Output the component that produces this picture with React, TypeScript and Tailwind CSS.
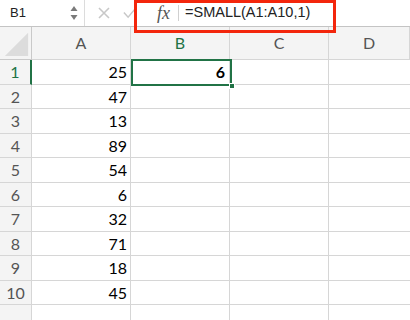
import React from "react";

const values = [25, 47, 13, 89, 54, 6, 32, 71, 18, 45];
const rowHeights = ["h-[25px]", "h-[24px]", "h-[25px]", "h-[24px]", "h-[25px]", "h-[24px]", "h-[25px]", "h-[24px]", "h-[25px]", "h-[24px]", "h-[25px]"];

function Corner() {
  return (
    <div className="relative h-full border-r border-b border-[#c9c9c9] bg-[#f4f4f4]">
      <svg viewBox="0 0 32 33" className="absolute inset-0 size-full" aria-hidden="true">
        <polygon points="29,6 29,30 5,30" fill="#dcdcdc" />
      </svg>
    </div>
  );
}

function ColHeader({ label, active }: { label: string; active?: boolean }) {
  return (
    <div
      className={`flex h-full items-center justify-center border-r border-b border-[#d6d6d6] bg-[#f4f4f4] text-[16px] ${
        active ? "text-[#217346]" : "text-[#555]"
      }`}
    >
      {label}
    </div>
  );
}

export default function App() {
  return (
    <div className="relative h-[320px] w-[410px] overflow-hidden bg-white font-['Lato',sans-serif]">
      {/* formula bar */}
      <div className="flex h-[27px] items-center border-b border-[#c4c4c4] bg-white font-['Liberation_Sans',sans-serif] text-[13px] text-[#222]">
        <div className="flex h-full w-[85px] items-center justify-between border-r border-[#dcdcdc] pl-[10px] pr-[6px]">
          <span>B1</span>
          <svg viewBox="0 0 8 16" className="h-[16px] w-[8px]" aria-hidden="true">
            <polygon points="4,1 7.5,6 0.5,6" fill="#7a7a7a" />
            <polygon points="4,15 7.5,10 0.5,10" fill="#7a7a7a" />
          </svg>
        </div>
        <svg viewBox="0 0 12 12" className="ml-[13px] size-[12px]" aria-hidden="true">
          <path d="M1 1L11 11M11 1L1 11" stroke="#c8c8c8" strokeWidth="1.6" />
        </svg>
        <svg viewBox="0 0 14 12" className="ml-[13px] size-[13px]" aria-hidden="true">
          <path d="M1 5L5.5 10L13 1" fill="none" stroke="#c8c8c8" strokeWidth="1.6" />
        </svg>
        <span className="ml-[21px] font-['Liberation_Serif',serif] text-[18px] italic text-[#555]">fx</span>
        <div className="ml-[8px] h-[16px] border-l border-[#d0d0d0]" />
        <span className="ml-[6px] text-[14.5px]">=SMALL(A1:A10,1)</span>
      </div>

      {/* grid */}
      <div className="grid grid-cols-[32px_99px_99px_99px_1fr]">
        <div className="h-[33px]">
          <Corner />
        </div>
        <div className="h-[33px]">
          <ColHeader label="A" />
        </div>
        <div className="h-[33px]">
          <ColHeader label="B" active />
        </div>
        <div className="h-[33px]">
          <ColHeader label="C" />
        </div>
        <div className="h-[33px]">
          <ColHeader label="D" />
        </div>

        {rowHeights.map((h, i) => (
          <React.Fragment key={i}>
            <div
              className={`${h} flex items-center justify-center border-r border-b bg-[#f4f4f4] text-[16px] ${
                i === 0 ? "border-r-2 border-r-[#217346] border-b-[#d6d6d6] text-[#217346]" : "border-[#d6d6d6] text-[#555]"
              }`}
            >
              {i < 10 ? i + 1 : ""}
            </div>
            <div className={`${h} flex items-center justify-end border-r border-b border-[#d6d6d6] pr-[3px] text-[16px] text-black`}>
              {i < 10 ? values[i] : ""}
            </div>
            <div className={`${h} flex items-center justify-end border-r border-b border-[#d6d6d6] pr-[4px] text-[16px] font-bold text-black`}>
              {i === 0 ? "6" : ""}
            </div>
            <div className={`${h} border-r border-b border-[#d6d6d6]`} />
            <div className={`${h} border-b border-[#d6d6d6]`} />
          </React.Fragment>
        ))}
      </div>

      {/* selection on B1 */}
      <div className="pointer-events-none absolute left-[131px] top-[59px] h-[27px] w-[101px] border-2 border-[#217346]" />
      <div className="pointer-events-none absolute left-[229px] top-[83px] size-[6px] border border-white bg-[#217346]" />

      {/* annotation box */}
      <div className="pointer-events-none absolute left-[134px] top-0 h-[33px] w-[202px] border-[3px] border-[#f3260c]" />
    </div>
  );
}
